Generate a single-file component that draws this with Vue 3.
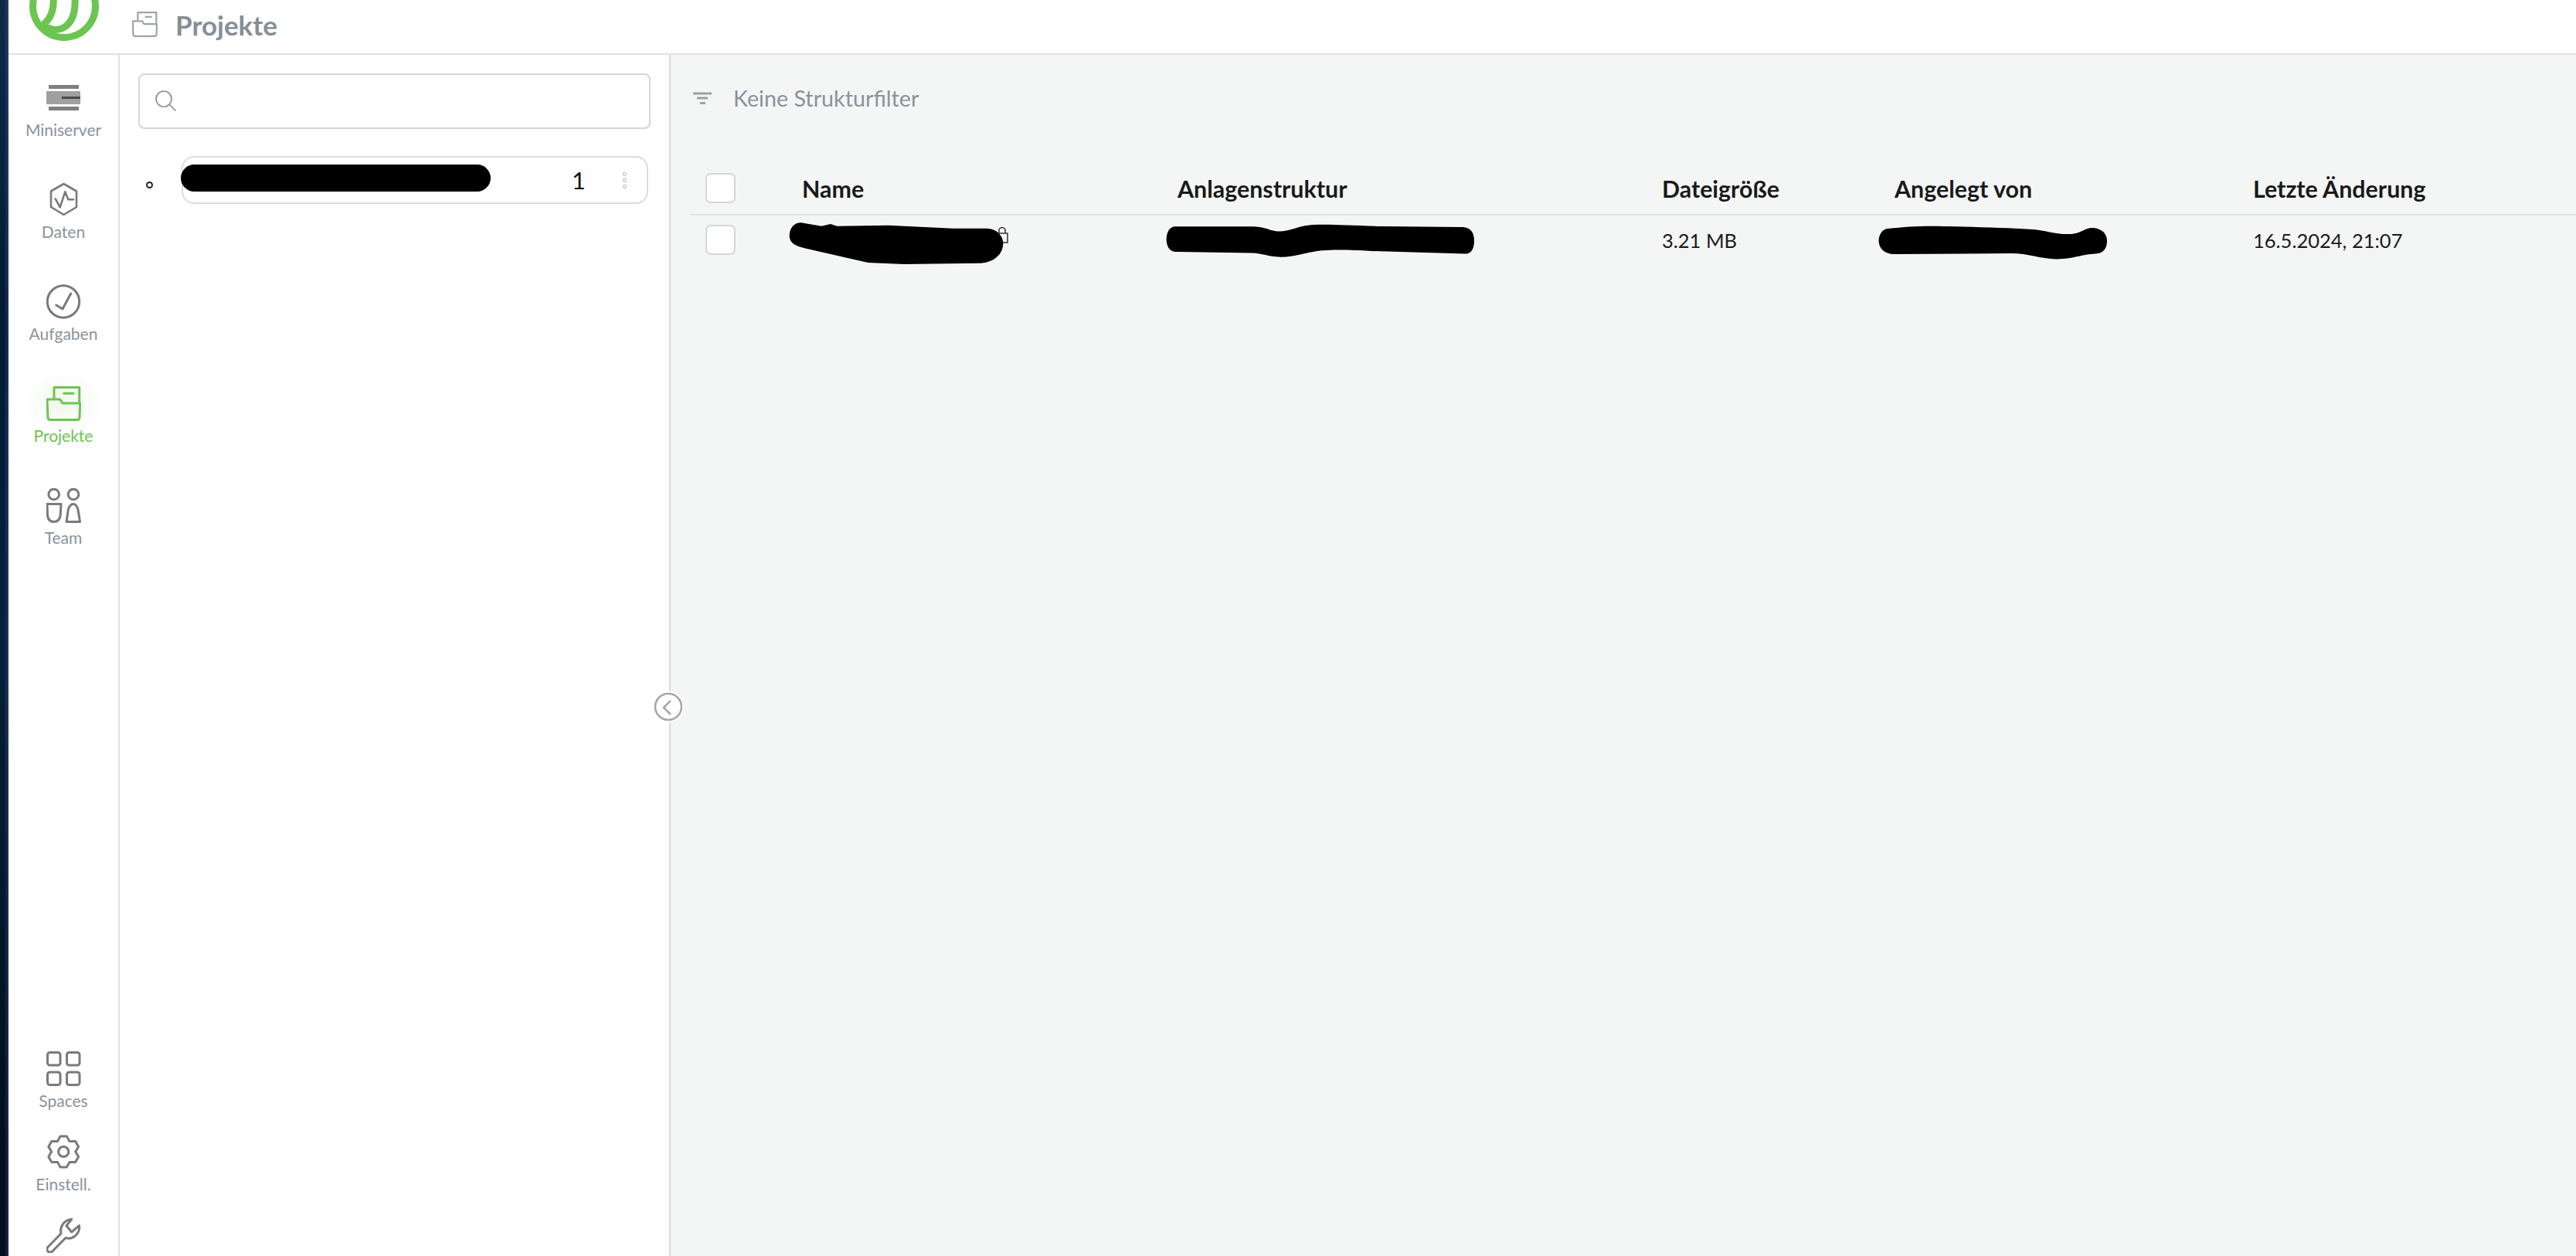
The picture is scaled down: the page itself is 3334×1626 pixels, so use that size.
<template>
  <div class="app">
    <div class="strip"></div>
    <div class="shell">
      <header class="topbar">
        <svg class="logo" viewBox="30 0 100 56" width="100" height="56" fill="none" stroke="#6cc551" stroke-width="9">
          <circle cx="83" cy="8" r="40.5" />
          <path d="M69 -2 C70 12 66 24 56 32" />
          <path d="M56 32 C72 46 99 38 97 -2" />
        </svg>
        <svg class="title-icon" viewBox="0 0 45 45" width="33" height="33" fill="none" stroke="#9ea3a8" stroke-width="3" stroke-linejoin="round">
          <path d="M10 15V1.5H42.7V20" />
          <path d="M22.7 9.3H35" />
          <path d="M1 17H17.7L21 22H43.7L43 40Q43 43.5 39.5 43.5H5Q2 43.5 2 40Z" />
        </svg>
        <h1 class="title">Projekte</h1>
      </header>

      <div class="body">
        <nav class="sidebar">
          <div class="nav-group">
            <a v-for="item in topNav" :key="item.label" class="nav-item" :class="{ active: item.active }">
              <svg class="nav-icon" viewBox="0 0 45 45" fill="none" stroke="currentColor" stroke-width="3" stroke-linecap="round" stroke-linejoin="round">
                <template v-if="item.icon === 'server'">
                  <g stroke="none">
                    <rect x="3" y="6" width="39" height="5" fill="#7f7f7f" />
                    <rect x="0" y="14" width="44" height="17" fill="#a0a0a0" />
                    <rect x="20" y="21" width="24" height="3" fill="#4a4a4a" />
                    <rect x="3" y="34" width="39" height="5" fill="#7f7f7f" />
                  </g>
                </template>
                <template v-else-if="item.icon === 'data'">
                  <path d="M22.5 2L39 11.5V32L22.5 42L6 32V11.5Z" stroke-width="2.6" />
                  <path d="M11.7 21.3L17.7 32.3L24.3 12.3L28.3 22.3H35" stroke-width="2.6" />
                </template>
                <template v-else-if="item.icon === 'check'">
                  <circle cx="22" cy="22.5" r="20.7" />
                  <path d="M12.7 27L21 32L31.7 12" />
                </template>
                <template v-else-if="item.icon === 'folder'">
                  <path d="M10 15V1.5H42.7V20" />
                  <path d="M22.7 9.3H35" />
                  <path d="M1 17H17.7L21 22H43.7L43 40Q43 43.5 39.5 43.5H5Q2 43.5 2 40Z" />
                </template>
                <template v-else-if="item.icon === 'team'">
                  <circle cx="9.7" cy="8" r="6.8" />
                  <circle cx="35" cy="8" r="6.8" />
                  <path d="M1 20.5H19L18.2 35Q17 43.5 9.7 43.5Q2.4 43.5 1.500 35Z" />
                  <path d="M26 43.5H43.5L41 28Q39 20.5 35 20.5Q30.500 20.5 28.3 28Z" />
                </template>
              </svg>
              <span class="nav-label">{{ item.label }}</span>
            </a>
          </div>

          <div class="nav-group bottom">
            <a class="nav-item short">
              <svg class="nav-icon" viewBox="0 0 45 45" fill="none" stroke="currentColor" stroke-width="3">
                <rect x="1.5" y="1.5" width="16.5" height="16.5" rx="3" />
                <rect x="26.5" y="1.5" width="16.5" height="16.5" rx="3" />
                <rect x="1.5" y="27" width="16.5" height="16.5" rx="3" />
                <rect x="26.5" y="27" width="16.5" height="16.5" rx="3" />
              </svg>
              <span class="nav-label">Spaces</span>
            </a>
            <a class="nav-item short">
              <svg class="nav-icon" viewBox="0 0 45 45" fill="none" stroke="currentColor" stroke-width="3" stroke-linejoin="round">
                <path :d="gearPath" />
                <circle cx="22.2" cy="22" r="6.6" />
              </svg>
              <span class="nav-label">Einstell.</span>
            </a>
            <a class="nav-item last">
              <svg class="nav-icon" viewBox="0 0 45 45" fill="none" stroke="currentColor" stroke-width="3" stroke-linejoin="round">
                <path d="M1.8 37.5L19 20C17 10 24 2 32.7 1.5L26 9.7L32.7 18L42.5 9.7C44 20 34 28.5 25 25.5L8 42.8A3.7 3.7 0 0 1 1.8 37.5Z" />
              </svg>
            </a>
          </div>
        </nav>

        <aside class="panel">
          <div class="search">
            <svg viewBox="0 0 28 28" width="28" height="28" fill="none" stroke="#8a929a" stroke-width="1.7">
              <circle cx="11" cy="11" r="10" />
              <path d="M18 18L26.5 26.5" />
            </svg>
          </div>
          <div class="tree">
            <span class="bullet"></span>
            <div class="tree-row">
              <span class="scribble"></span>
              <span class="count">1</span>
              <span class="dots"><i></i><i></i><i></i></span>
            </div>
          </div>
          <button class="collapse">
            <svg viewBox="0 0 40 40" width="40" height="40" fill="none" stroke="#a8a8a8" stroke-width="2.6">
              <circle cx="20" cy="20" r="17" fill="#fff" />
              <path d="M23 12L14 21L23 30" />
            </svg>
          </button>
        </aside>

        <main class="main">
          <div class="filter">
            <svg viewBox="0 0 24 16" width="24" height="16" fill="none" stroke="#a0a0a0" stroke-width="3">
              <path d="M0 2H24M5 8H19M9 14.500H16" />
            </svg>
            <span>Keine Strukturfilter</span>
          </div>

          <div class="table">
            <div class="row head">
              <div class="cell"><span class="checkbox"></span></div>
              <div class="cell" v-for="col in columns" :key="col">{{ col }}</div>
            </div>
            <div class="row">
              <div class="cell"><span class="checkbox"></span></div>
              <div class="cell">
                <svg class="redact name" viewBox="1020 285 290 60" width="290" height="60">
                  <path d="M1293 302V297A4.500 4.500 0 0 1 1301 297V302M1292 302H1304V314H1292Z" fill="none" stroke="#333" stroke-width="1.5" />
                  <path d="M1021.700 305C1022 294 1029 288 1036.700 288.300L1063.300 292.700L1075 290L1083.300 292.700L1150 291.700L1233.300 295.700H1276.700C1290 296 1298.300 305 1298.300 315C1298.300 330 1285 340.700 1266.700 340.700L1170 342L1123.300 340L1043.300 321.700C1030 319 1021.700 315 1021.700 305Z" />
                </svg>
              </div>
              <div class="cell">
                <svg class="redact struct" viewBox="1505 285 410 55" width="410" height="55">
                  <path d="M1509.600 310C1510 300 1514 293.300 1521 293.300L1622 293.300C1640 294 1645 300 1657 299.500C1672 299 1680 292 1700 291C1720 290 1752 292 1790 293L1894 294C1904 295 1908 302 1908 311.700C1908 322 1904 329 1896 328.500L1775 325C1745 323 1720 323 1705 325C1690 327 1675 333 1657 332.700C1640 332 1635 328 1620 327.500L1521 326C1514 325 1510 320 1509.600 310Z" />
                </svg>
              </div>
              <div class="cell">3.21 MB</div>
              <div class="cell">
                <svg class="redact owner" viewBox="2425 285 310 55" width="310" height="55">
                  <path d="M2431.500 311.700C2432 302 2437 297 2443 296C2470 293 2490 292 2520 293C2560 294 2600 295 2626.600 296.700C2650 298 2660 304 2680 303C2695 302 2697 295 2709 295C2720 296 2727 302 2727 311.700C2727 322 2722 328 2712 328.500C2695 329 2685 335 2662 335.500C2640 335 2625 328 2603 328L2449 329C2438 327 2432 322 2431.500 311.700Z" />
                </svg>
              </div>
              <div class="cell">16.5.2024, 21:07</div>
            </div>
          </div>
        </main>
      </div>
    </div>
  </div>
</template>

<script setup>
const topNav = [
  { label: 'Miniserver', icon: 'server' },
  { label: 'Daten', icon: 'data' },
  { label: 'Aufgaben', icon: 'check' },
  { label: 'Projekte', icon: 'folder', active: true },
  { label: 'Team', icon: 'team' }
]

const columns = ['Name', 'Anlagenstruktur', 'Dateigröße', 'Angelegt von', 'Letzte Änderung']

// six rounded teeth around the centre
const gearPath = (() => {
  const pts = []
  for (let i = 0; i < 6; i++) {
    const a = (i * 60 - 90) * Math.PI / 180
    const spread = 0.2
    const at = (r, t) => `${(22.2 + r * Math.cos(t)).toFixed(1)} ${(22 + r * Math.sin(t)).toFixed(1)}`
    pts.push(at(20.5, a - spread), at(20.5, a + spread), at(15.5, a + Math.PI / 6))
  }
  return `M${pts.join('L')}Z`
})()
</script>

<style>
html, body {
  margin: 0;
  background: #fff;
}
</style>

<style scoped>
.app {
  display: flex;
  height: 1626px;
  overflow: hidden;
  font-family: Lato, "Liberation Sans", sans-serif;
  color: #1a1a1a;
}

.strip {
  flex: 0 0 11px;
  background:
    linear-gradient(90deg, transparent 50%, rgba(120, 140, 170, .25)),
    linear-gradient(180deg, #10294a, #021a35 25%, #06203c 50%, #010f22 90%);
}

.shell {
  flex: 1;
  display: flex;
  flex-direction: column;
  min-width: 0;
}

.topbar {
  flex: 0 0 69px;
  display: flex;
  border-bottom: 2px solid #dfe1e8;
  background: #fff;
}

.logo {
  margin-left: 19px;
}

.title-icon {
  margin: 15px 0 0 41px;
}

.title {
  margin: 0 0 0 23px;
  font-size: 35px;
  line-height: 64px;
  font-weight: 700;
  color: #868e96;
}

.body {
  flex: 1;
  display: flex;
  min-height: 0;
}

.sidebar {
  flex: 0 0 142px;
  display: flex;
  flex-direction: column;
  justify-content: space-between;
  padding-top: 17px;
  border-right: 2px solid #dfe1e8;
  background: #fff;
}

.nav-item {
  display: flex;
  flex-direction: column;
  align-items: center;
  height: 132px;
  padding-top: 16px;
  box-sizing: border-box;
  color: #7a7a7a;
}

.nav-item.short {
  height: 108px;
  padding-top: 0;
}

.nav-item.last {
  height: 49px;
  padding-top: 0;
}

.nav-item.active {
  color: #6cc551;
  background: radial-gradient(ellipse 52px 44px at 50% 38px, #f0f8ed, #fff 100%);
}

.nav-icon {
  width: 45px;
  height: 45px;
  flex: none;
}

.nav-label {
  margin-top: 7px;
  font-size: 21px;
  line-height: 24px;
  color: #8a939c;
}

.active .nav-label {
  color: #6cc551;
}

.panel {
  position: relative;
  flex: 0 0 711px;
  box-sizing: content-box;
  border-right: 2px solid #d9dbe0;
  background: #fff;
}

.search {
  display: flex;
  align-items: center;
  box-sizing: border-box;
  width: 663px;
  height: 72px;
  margin: 24px 0 0 24px;
  padding-left: 20px;
  border: 2px solid #d2d6dc;
  border-radius: 8px;
}

.tree {
  display: flex;
  margin-top: 35px;
}

.bullet {
  width: 5px;
  height: 5px;
  margin: 33px 0 0 34px;
  border: 2px solid #222;
  border-radius: 50%;
}

.tree-row {
  display: flex;
  align-items: center;
  box-sizing: border-box;
  width: 604px;
  height: 62px;
  margin-left: 37px;
  border: 2px solid #dcdcdc;
  border-radius: 16px;
}

.scribble {
  width: 401px;
  height: 35px;
  margin: 0 0 5px -3px;
  border-radius: 18px;
  background: #000;
}

.count {
  margin-left: 105px;
  font-size: 31px;
  font-weight: 400;
  line-height: 1;
  color: #111;
}

.dots {
  display: flex;
  flex-direction: column;
  gap: 3px;
  margin-left: 48px;
}

.dots i {
  width: 3px;
  height: 3px;
  border: 1.5px solid #aaa;
  border-radius: 50%;
}

.collapse {
  position: absolute;
  top: 824px;
  right: -19px;
  width: 40px;
  height: 40px;
  padding: 0;
  border: 0;
  border-radius: 50%;
  background: #fff;
}

.collapse svg {
  display: block;
}

.main {
  flex: 1;
  min-width: 0;
  background: #f4f6f6;
}

.filter {
  display: flex;
  align-items: center;
  gap: 28px;
  height: 112px;
  padding-left: 29px;
  font-size: 28.7px;
  color: #8a9299;
}

.table {
  margin: 27px 0 0 25px;
}

.row {
  display: grid;
  grid-template-columns: 145px 486px 627px 301px 464px 1fr;
  height: 63px;
  align-items: center;
  font-size: 25.5px;
}

.row.head {
  height: 67px;
  border-bottom: 2px solid #e1e3e8;
  box-sizing: content-box;
  font-size: 30.4px;
  font-weight: 700;
}

.cell {
  position: relative;
  display: flex;
  align-items: center;
  height: 100%;
  white-space: nowrap;
}

.checkbox {
  box-sizing: border-box;
  width: 39px;
  height: 39px;
  margin-left: 20px;
  border: 2px solid #d2d6dc;
  border-radius: 7px;
  background: #fff;
}

.redact {
  position: absolute;
  top: 6px;
}

.redact.name {
  left: -18px;
}

.redact.struct {
  left: -19px;
}

.redact.owner {
  left: -27px;
}
</style>
